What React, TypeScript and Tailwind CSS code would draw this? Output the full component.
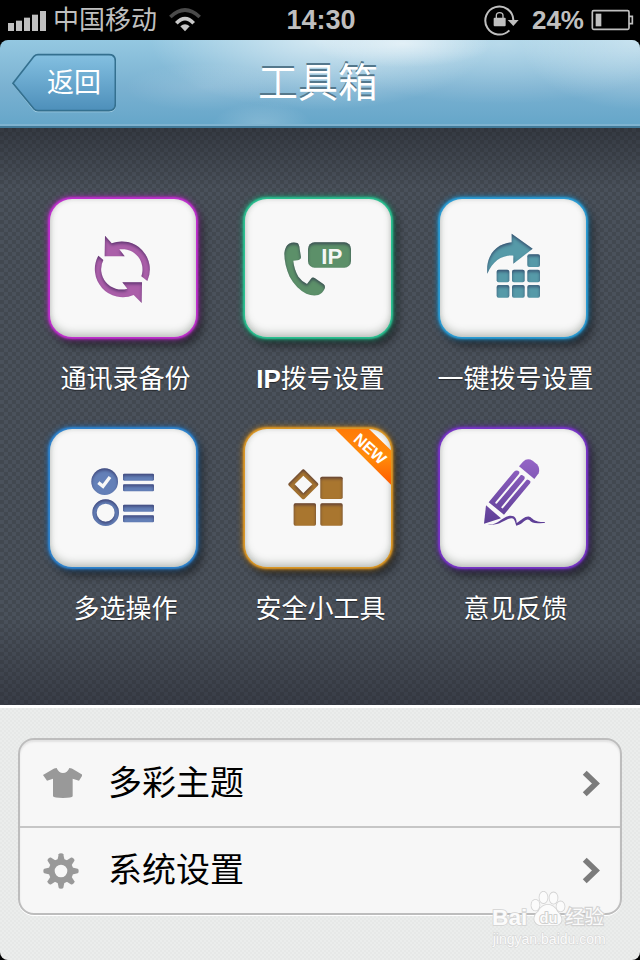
import type { ReactNode } from "react";

interface Tool {
  id: string;
  label: ReactNode;
  glow: string;
  isNew?: boolean;
  icon: ReactNode;
}

interface SettingRowProps {
  label: string;
  icon: ReactNode;
}

const tools: Tool[] = [
  {
    id: "backup",
    label: "通讯录备份",
    glow: "shadow-[0_0_2px_2px_#c42fd2,0_0_6px_2px_#9a2ca8,5px_7px_8px_2px_rgba(0,0,0,0.45)]",
    icon: (
      <svg viewBox="60 58 438 414" className="w-full h-full" fill="#ab5fa9">
        <g filter="url(#carve)">
          <path d="M225 168L245 191A84 84 0 0 1 352 304L334 290A61 61 0 0 0 268 209L284 230H224Z" />
          <path d="M335 370L311 346A84 84 0 0 1 205 228L220 241A61 61 0 0 0 292 327L277 308H336Z" />
        </g>
      </svg>
    ),
  },
  {
    id: "ip",
    label: (
      <>
        <b>IP</b>拨号设置
      </>
    ),
    glow: "shadow-[0_0_2px_2px_#2bc493,0_0_6px_2px_#1c9a72,5px_7px_8px_2px_rgba(0,0,0,0.45)]",
    icon: (
      <svg viewBox="60 58 438 414" className="w-full h-full" fill="#5c9069">
        <g filter="url(#carve)">
          <path d="M192 192Q204 186 217 190Q223 194 224 208L228 233Q227 241 217 242L205 243Q207 268 220 291Q231 306 246 313L258 297Q263 291 270 296L296 314Q302 319 299 327Q292 341 280 346Q262 350 244 342Q213 326 194 291Q178 256 178 221Q180 199 192 192Z" />
          <rect x="249" y="188" width="129" height="76" rx="20" />
        </g>
        <text
          x="289"y="254"
          fontSize="67"
          className="font-bold font-['Liberation_Sans',sans-serif]"
          fill="#f4f6f4"
        >
          IP
        </text>
      </svg>
    ),
  },
  {
    id: "dial",
    label: "一键拨号设置",
    glow: "shadow-[0_0_2px_2px_#2b9fd8,0_0_6px_2px_#1d7fb4,5px_7px_8px_2px_rgba(0,0,0,0.45)]",
    icon: (
      <svg viewBox="60 58 438 414" className="w-full h-full" fill="#569aa8">
        <g filter="url(#carve)">
          <path d="M275 162L338 207L280 252V228C245 226 218 245 202 282C197 235 222 193 275 188Z" />
          <rect x="322" y="224" width="38" height="38" rx="6" />
          <rect x="230" y="270" width="38" height="38" rx="6" />
          <rect x="276" y="270" width="38" height="38" rx="6" />
          <rect x="322" y="270" width="38" height="38" rx="6" />
          <rect x="230" y="316" width="38" height="38" rx="6" />
          <rect x="276" y="316" width="38" height="38" rx="6" />
          <rect x="322" y="316" width="38" height="38" rx="6" />
        </g>
      </svg>
    ),
  },
  {
    id: "multi",
    label: "多选操作",
    glow: "shadow-[0_0_2px_2px_#2f86d2,0_0_6px_2px_#2367a8,5px_7px_8px_2px_rgba(0,0,0,0.45)]",
    icon: (
      <svg viewBox="60 43 438 414" className="w-full h-full" fill="#6480b8">
        <g filter="url(#carve)">
          <circle cx="224" cy="201" r="40" />
          <path
            fillRule="evenodd"
            d="M187 294a40 40 0 1 0 80 0a40 40 0 1 0 -80 0ZM200 294a27 27 0 1 1 54 0a27 27 0 1 1 -54 0Z"
          />
          <rect x="279" y="177" width="93" height="21" rx="4" />
          <rect x="279" y="209" width="93" height="21" rx="4" />
          <rect x="279" y="270" width="93" height="21" rx="4" />
          <rect x="279" y="302" width="93" height="21" rx="4" />
        </g>
        <path d="M205 204L219 215L240 187" fill="none" stroke="#f8f8f8" strokeWidth="10" />
      </svg>
    ),
  },
  {
    id: "safe",
    label: "安全小工具",
    isNew: true,
    glow: "shadow-[0_0_2px_2px_#e09a26,0_0_6px_2px_#a8721c,5px_7px_8px_2px_rgba(0,0,0,0.45)]",
    icon: (
      <svg viewBox="60 43 438 414" className="w-full h-full" fill="#a9762f">
        <g filter="url(#carve)">
          <path
            fillRule="evenodd"
            d="M231 166Q235 162 239 166L278 205Q282 209 278 213L239 252Q235 256 231 252L192 213Q188 209 192 205ZM235 183L209 209L235 236L262 209Z"
          />
          <rect x="286" y="186" width="67" height="67" rx="5" />
          <rect x="206" y="266" width="67" height="67" rx="5" />
          <rect x="286" y="266" width="67" height="67" rx="5" />
        </g>
      </svg>
    ),
  },
  {
    id: "feedback",
    label: "意见反馈",
    glow: "shadow-[0_0_2px_2px_#7b35cc,0_0_6px_2px_#5c2a9c,5px_7px_8px_2px_rgba(0,0,0,0.45)]",
    icon: (
      <svg viewBox="60 43 438 414" className="w-full h-full" fill="url(#pencil)">
        <defs>
          <linearGradient id="pencil" gradientUnits="userSpaceOnUse" x1="0" y1="134" x2="0" y2="334">
            <stop offset="0" stopColor="#9464c6" />
            <stop offset="1" stopColor="#5b3d94" />
          </linearGradient>
        </defs>
        <path d="M297 155L309 141Q322 128 338 138L351 149Q361 160 356 176L343 193Z" />
        <path d="M206 263L282 171Q290 164 298 171L298 181Q306 179 314 186L314 196Q324 191 331 200Q332 204 329 207L252 300Z" />
        <path d="M229 264L301 178M247 278L318 193" fill="none" stroke="#f8f8f8" strokeWidth="6" strokeLinecap="round" />
        <path d="M198 272L243 311L192 327Z" />
        <path d="M202 330C235 332 245 308 266 304C285 301 290 312 290 325C308 314 314 304 328 306C340 310 338 322 375 322C376 324 374 325 370 325C345 327 336 326 328 316C318 308 310 328 289 333C285 324 285 312 275 311C255 312 240 335 202 330Z" />
      </svg>
    ),
  },
];

// inner shadow shared by the tile icons
function CarveFilter() {
  return (
    <svg width="0" height="0" className="absolute" aria-hidden="true">
      <filter id="carve" x="-10%" y="-10%" width="120%" height="120%" colorInterpolationFilters="sRGB">
        <feComponentTransfer in="SourceAlpha" result="inverse">
          <feFuncA type="table" tableValues="1 0" />
        </feComponentTransfer>
        <feGaussianBlur in="inverse" stdDeviation="5" />
        <feOffset dx="0" dy="5" result="blurred" />
        <feFlood floodColor="#1c1040" floodOpacity="0.5" />
        <feComposite in2="blurred" operator="in" />
        <feComposite in2="SourceAlpha" operator="in" result="shade" />
        <feMerge>
          <feMergeNode in="SourceGraphic" />
          <feMergeNode in="shade" />
        </feMerge>
      </filter>
    </svg>
  );
}

function StatusBar() {
  return (
    <div className="grid grid-cols-[1fr_auto_1fr] items-center h-10 pl-2 pr-1.5 text-[26px] leading-10 text-[#bfbfbf]">
      <div className="flex items-center">
        <svg viewBox="24 24 114 63" className="w-[38px] h-[21px]" fill="#bfbfbf">
          <rect x="24" y="63" width="18" height="24" />
          <rect x="48" y="56" width="18" height="31" />
          <rect x="72" y="47" width="18" height="40" />
          <rect x="96" y="38" width="18" height="49" />
          <rect x="120" y="27" width="18" height="60" />
        </svg>
        <span className="ml-[7px]">中国移动</span>
        <svg viewBox="510 22 96 72" className="w-8 h-6 ml-3" fill="none">
          <path d="M514 49Q558 7 602 49" stroke="#4a4a4a" strokeWidth="11" />
          <path d="M532 68Q558 40 584 68" stroke="#c8c8c8" strokeWidth="11" />
          <path d="M544 77Q558 64 572 77L558 92Z" fill="#c8c8c8" />
        </svg>
      </div>
      <span className="font-bold text-[27px] leading-10">14:30</span>
      <div className="flex items-center justify-end">
        <svg viewBox="487 9 108 96" className="w-9 h-8" fill="none">
          <path d="M575 57A42 42 0 1 0 563 88" stroke="#bfbfbf" strokeWidth="6" />
          <path d="M558 57H591L575 75Z" fill="#bfbfbf" />
          <rect x="516" y="50" width="36" height="26" rx="3" fill="#bfbfbf" />
          <path d="M524 52V44Q524 35 534 35Q544 35 544 44V52" stroke="#bfbfbf" strokeWidth="4" />
        </svg>
        <span className="ml-3 font-bold">24%</span>
        <svg viewBox="815 24 129 66" className="w-[43px] h-[22px] ml-[7px]" fill="none">
          <rect x="819" y="29" width="110" height="56" rx="4" stroke="#bfbfbf" strokeWidth="5" />
          <path d="M929 46H939V68H929" stroke="#bfbfbf" strokeWidth="5" />
          <rect x="829" y="38" width="17" height="38" fill="#bfbfbf" />
        </svg>
      </div>
    </div>
  );
}

function Header() {
  return (
    <header className="grid grid-cols-[1fr_auto_1fr] items-center h-[88px] pl-3 pr-4 rounded-t-lg border-b-2 border-[#437b9a] shadow-[inset_0_-2px_0_#7fb3d0] bg-[radial-gradient(ellipse_90px_24px_at_63%_4%,rgba(255,255,255,0.55),transparent),radial-gradient(ellipse_170px_70px_at_50%_0%,rgba(255,255,255,0.6),transparent),radial-gradient(ellipse_120px_70px_at_100%_0%,rgba(255,255,255,0.45),transparent),radial-gradient(ellipse_50px_24px_at_41%_100%,rgba(255,255,255,0.2),transparent),radial-gradient(ellipse_80px_24px_at_32%_55%,rgba(255,255,255,0.14),transparent),radial-gradient(ellipse_180px_60px_at_78%_5%,rgba(255,255,255,0.35),transparent),linear-gradient(#94c8e1,#7ab1d1_55%,#65a6c9)]">
      <button className="relative w-[104px] h-[60px] justify-self-start pl-[35px] text-left text-[27px] text-white">
        <svg viewBox="34 157 312 180" className="absolute inset-0 w-full h-full" fill="none">
          <defs>
            <linearGradient id="back" x1="0" y1="0" x2="0" y2="1">
              <stop offset="0" stopColor="#84c0e1" />
              <stop offset="1" stopColor="#4d8fba" />
            </linearGradient>
          </defs>
          <path
            d="M38 251L100 171Q105 166 112 166H325Q344 166 344 185V313Q344 333 325 333H112Q105 333 100 328Z"
            stroke="#a3cfe4"
            strokeWidth="4"
          />
          <path
            d="M37 248L100 167Q105 162 112 162H325Q344 162 344 181V310Q344 330 325 330H112Q105 330 100 325Z"
            fill="url(#back)"
            stroke="#34708f"
            strokeWidth="5"
          />
        </svg>
        <span className="relative">返回</span>
      </button>
      <h1 className="text-[40px] leading-[48px] text-white [text-shadow:0_-2px_0_#54788c]">工具箱</h1>
    </header>
  );
}

function ToolTile({ label, glow, isNew, icon }: Tool) {
  return (
    <button className="flex flex-col items-center">
      <span className={`relative w-[146px] h-[138px] rounded-[22px] bg-[#f8f8f8] ${glow}`}>
        <span className="block w-full h-full overflow-hidden rounded-[22px] shadow-[inset_0_-5px_7px_rgba(100,110,100,0.28),inset_0_0_5px_rgba(100,110,100,0.25)]">
          {icon}
        </span>
        {isNew && (
          <svg viewBox="58 43 438 414" className="absolute inset-0 w-full h-full rounded-[22px]">
            <defs>
              <linearGradient id="ribbon" x1="0" y1="0" x2="0" y2="1">
                <stop offset="0" stopColor="#ff7a08" />
                <stop offset="0.5" stopColor="#ff8c0a" />
                <stop offset="1" stopColor="#ff5a00" />
              </linearGradient>
            </defs>
            <path d="M328 43H430L496 107V210Z" fill="url(#ribbon)" />
            <text
              transform="translate(433 103) rotate(42)"
              y="16"
              fontSize="48"
              textAnchor="middle"
              fill="#fff"
              className="font-bold font-['Liberation_Sans',sans-serif]"
            >
              NEW
            </text>
          </svg>
        )}
      </span>
      <span className="mt-6 pl-1.5 text-[26px] leading-9 text-white whitespace-nowrap [text-shadow:0_1px_1px_rgba(0,0,0,0.5)]">
        {label}
      </span>
    </button>
  );
}

function SettingRow({ label, icon }: SettingRowProps) {
  return (
    <a
      href="#"
      className="flex items-center h-[88px] pl-[22px] pr-5 border-b-2 border-[#c6c6c6] last:h-[85px] last:border-b-0"
    >
      {icon}
      <span className="ml-[26px] flex-1 text-[34px] text-black">{label}</span>
      <svg viewBox="424 238 54 82" className="w-[18px] h-[27px]" fill="none">
        <path d="M432 246L466 279L432 312" stroke="#7b7b7b" strokeWidth="17" />
      </svg>
    </a>
  );
}

function ShirtIcon() {
  return (
    <svg viewBox="124 221 120 108" className="w-10 h-9" fill="#999">
      <path d="M168 230Q174 245 187 245Q200 245 206 230Q214 231 220 235L246 251L235 268L216 262V315Q214 320 187 320Q160 320 157 315V262L139 268L127 251L154 235Q160 231 168 230Z" />
    </svg>
  );
}

function GearIcon() {
  const teeth = [0, 45, 90, 135, 180, 225, 270, 315];
  return (
    <svg viewBox="127 481 120 120" className="w-10 h-10" fill="#999">
      {teeth.map((angle) => (
        <path key={angle} d="M173 510L177 491Q178 488 184 488Q190 488 191 491L195 510Z" transform={`rotate(${angle} 184 541)`} />
      ))}
      <circle cx="184" cy="541" r="28" fill="none" stroke="#999" strokeWidth="18" />
    </svg>
  );
}

function Watermark() {
  return (
    <svg
      viewBox="30 15 350 170"
      className="absolute right-8 bottom-3 w-[117px] h-[57px] pointer-events-none font-['Liberation_Sans','Noto_Sans_CJK_SC',sans-serif]"
      fill="#fbfbfb"
      stroke="#d3d3d3"
      strokeWidth="5"
      paintOrder="stroke"
    >
      <text x="33" y="116" fontSize="68" className="font-bold">
        Bai
      </text>
      <path d="M200 56Q182 56 172 76Q158 86 160 102Q165 118 184 117H218Q238 118 241 102Q240 86 228 76Q218 56 200 56Z" />
      <ellipse cx="163" cy="57" rx="12" ry="16" />
      <ellipse cx="187" cy="34" rx="12" ry="17" />
      <ellipse cx="217" cy="36" rx="12" ry="17" />
      <ellipse cx="238" cy="61" rx="12" ry="15" />
      <text x="175" y="110" fontSize="44" stroke="#c8c8c8" className="font-bold">
        du
      </text>
      <text x="252" y="112" fontSize="58" strokeWidth="7">
        经验
      </text>
      <text x="35" y="174" fontSize="42" strokeWidth="3">
        jingyan.baidu.com
      </text>
    </svg>
  );
}

function App() {
  return (
    <div className="min-h-screen flex flex-col bg-black font-['Liberation_Sans','Noto_Sans_CJK_SC',sans-serif]">
      <CarveFilter />
      <StatusBar />
      <Header />
      <main className="flex-1 flex flex-col">
        <section className="bg-[linear-gradient(rgba(20,22,28,0.4),transparent_60px,transparent_85%,rgba(30,30,40,0.4)),repeating-conic-gradient(#424850_0_25%,#4a515b_0_50%)] bg-[size:100%_100%,8px_8px]">
          <div className="grid grid-cols-3 gap-y-8 pl-[25px] pr-[30px] pt-[71px] pb-[78px]">
            {tools.map((tool) => (
              <ToolTile key={tool.id} {...tool} />
            ))}
          </div>
        </section>
        <section className="relative flex-1 rounded-b-lg border-t-3 border-white px-[18px] pt-[30px] pb-11 bg-[repeating-conic-gradient(#e6e8e7_0_25%,#ebedec_0_50%)] bg-[size:4px_4px]">
          <div className="rounded-2xl border-2 border-[#bdbdbd] bg-[#f7f7f7] shadow-[0_1px_0_#fff,inset_0_2px_2px_#e2e2e2]">
            <SettingRow label="多彩主题" icon={<ShirtIcon />} />
            <SettingRow label="系统设置" icon={<GearIcon />} />
          </div>
          <Watermark />
        </section>
      </main>
    </div>
  );
}

export default App;
